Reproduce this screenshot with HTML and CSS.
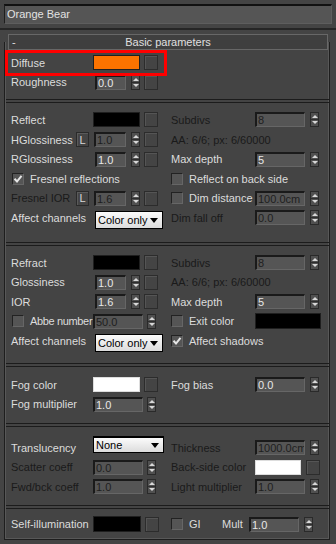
FILE: index.html
```html
<!DOCTYPE html>
<html>
<head>
<meta charset="utf-8">
<link rel="stylesheet" href="styles.css">
</head>
<body>
<div class="top"><div class="name">Orange Bear</div></div>
<div class="rule"></div>
<div class="head"><span class="minus">-</span><span class="title">Basic parameters</span><span></span></div>
<div class="frame">
  <div class="sec s1">
    <div class="col l">
      <div class="row"><span class="lab">Diffuse</span><span class="sw orange"></span><span class="mb"></span></div>
      <div class="row"><span class="lab">Roughness</span><span class="fld short">0.0</span><span class="spin"></span><span class="mb"></span></div>
    </div>
    <div class="col r"></div>
  </div>
  <div class="sep"></div>
  <div class="sec s2">
    <div class="col l">
      <div class="row"><span class="lab">Reflect</span><span class="sw black"></span><span class="mb"></span></div>
      <div class="row"><span class="lab narrow">HGlossiness</span><span class="lbtn">L</span><span class="fld short after-l dis">1.0</span><span class="spin"></span><span class="mb"></span></div>
      <div class="row"><span class="lab">RGlossiness</span><span class="fld short">1.0</span><span class="spin"></span><span class="mb"></span></div>
      <div class="row"><span class="cb on"><svg viewBox="0 0 10 10" width="10" height="10"><path d="M1.5 4.8 L4 7.5 L8.5 1.8" stroke="#e6e6e6" stroke-width="2" fill="none"/></svg></span><span class="cbl">Fresnel reflections</span></div>
      <div class="row"><span class="lab narrow dis">Fresnel IOR</span><span class="lbtn">L</span><span class="fld short after-l dis">1.6</span><span class="spin"></span><span class="mb"></span></div>
      <div class="row"><span class="lab">Affect channels</span><span class="dd">Color only</span></div>
    </div>
    <div class="col r">
      <div class="row"><span class="lab dis">Subdivs</span><span class="fld rw dis">8</span><span class="spin"></span></div>
      <div class="row"><span class="dis">AA: 6/6; px: 6/60000</span></div>
      <div class="row"><span class="lab">Max depth</span><span class="fld rw">5</span><span class="spin"></span></div>
      <div class="row"><span class="cb"></span><span class="cbl">Reflect on back side</span></div>
      <div class="row"><span class="cbwrap"><span class="cb"></span><span class="cbl">Dim distance</span></span><span class="fld rw dis">100.0cm</span><span class="spin"></span></div>
      <div class="row"><span class="lab dis">Dim fall off</span><span class="fld rw dis">0.0</span><span class="spin"></span></div>
    </div>
  </div>
  <div class="sep"></div>
  <div class="sec s3">
    <div class="col l">
      <div class="row"><span class="lab">Refract</span><span class="sw black"></span><span class="mb"></span></div>
      <div class="row"><span class="lab">Glossiness</span><span class="fld short">1.0</span><span class="spin"></span><span class="mb"></span></div>
      <div class="row"><span class="lab">IOR</span><span class="fld short">1.6</span><span class="spin"></span><span class="mb"></span></div>
      <div class="row"><span class="cb"></span><span class="cbl abbe">Abbe number</span><span class="fld wide dis">50.0</span><span class="spin sl"></span></div>
      <div class="row"><span class="lab">Affect channels</span><span class="dd">Color only</span></div>
    </div>
    <div class="col r">
      <div class="row"><span class="lab dis">Subdivs</span><span class="fld rw dis">8</span><span class="spin"></span></div>
      <div class="row"><span class="dis">AA: 6/6; px: 6/60000</span></div>
      <div class="row"><span class="lab">Max depth</span><span class="fld rw">5</span><span class="spin"></span></div>
      <div class="row"><span class="cbwrap"><span class="cb"></span><span class="cbl">Exit color</span></span><span class="sw black exit"></span></div>
      <div class="row"><span class="cb on"><svg viewBox="0 0 10 10" width="10" height="10"><path d="M1.5 4.8 L4 7.5 L8.5 1.8" stroke="#e6e6e6" stroke-width="2" fill="none"/></svg></span><span class="cbl">Affect shadows</span></div>
    </div>
  </div>
  <div class="sep"></div>
  <div class="sec s4">
    <div class="col l">
      <div class="row"><span class="lab">Fog color</span><span class="sw white"></span><span class="mb"></span></div>
      <div class="row"><span class="lab">Fog multiplier</span><span class="fld wide">1.0</span><span class="spin sl"></span></div>
    </div>
    <div class="col r">
      <div class="row"><span class="lab">Fog bias</span><span class="fld rw">0.0</span><span class="spin"></span></div>
    </div>
  </div>
  <div class="sep"></div>
  <div class="sec s5">
    <div class="col l">
      <div class="row"><span class="lab">Translucency</span><span class="dd tr">None</span></div>
      <div class="row"><span class="lab dis">Scatter coeff</span><span class="fld wide dis">0.0</span><span class="spin sl"></span></div>
      <div class="row"><span class="lab dis">Fwd/bck coeff</span><span class="fld wide dis">1.0</span><span class="spin sl"></span></div>
    </div>
    <div class="col r">
      <div class="row"><span class="lab dis">Thickness</span><span class="fld rw dis">1000.0cm</span><span class="spin"></span></div>
      <div class="row"><span class="lab dis">Back-side color</span><span class="sw white back"></span><span class="mb mb5"></span></div>
      <div class="row"><span class="lab dis">Light multiplier</span><span class="fld rw dis">1.0</span><span class="spin"></span></div>
    </div>
  </div>
  <div class="sep"></div>
  <div class="sec s6">
    <div class="col l">
      <div class="row"><span class="lab">Self-illumination</span><span class="sw black self"></span><span class="mb"></span></div>
    </div>
    <div class="col r">
      <div class="row"><span class="cb"></span><span class="cbl gi">GI</span><span class="mult">Mult</span><span class="fld rw">1.0</span><span class="spin"></span></div>
    </div>
  </div>
</div>
<div class="mark"></div>
</body>
</html>
```
FILE: styles.css
```css
body {
  margin: 0;
  width: 336px;
  height: 544px;
  overflow: hidden;
  background: #444444;
  font-family: "Liberation Sans", Arial, sans-serif;
  font-size: 11px;
  color: #dcdcdc;
  position: relative;
}
.top {
  padding: 4px 4px 0 4px;
}
.name {
  height: 20px;
  box-sizing: border-box;
  background: #555555;
  border-top: 2px solid #111111;
  border-left: 1px solid #1e1e1e;
  border-right: 1px solid #5e5e5e;
  border-bottom: 1px solid #5e5e5e;
  padding-left: 2px;
  line-height: 17px;
  color: #e2e2e2;
}
.rule {
  margin-top: 4px;
  height: 2px;
  background: #262626;
}
.head {
  margin: 4px 8px 0 8px;
  height: 16px;
  box-sizing: border-box;
  border: 1px solid #676767;
  background: #3f3f3f;
  position: relative;
  z-index: 1;
  display: grid;
  grid-template-columns: 1fr auto 1fr;
  align-items: center;
  line-height: 14px;
  color: #e0e0e0;
}
.minus {
  padding-left: 3px;
}
.frame {
  margin: -8px 6px 0 4px;
  padding-top: 8px;
  border-left: 1px solid #1e1e1e;
  border-right: 1px solid #1e1e1e;
  border-bottom: 1px solid #1e1e1e;
  box-shadow: inset 1px 0 #585858, inset -1px 0 #585858, inset 0 -1px #585858;
}
.sep {
  height: 4px;
  box-sizing: border-box;
  margin-left: 1px;
  border-top: 1px solid #1c1c1c;
  border-bottom: 1px solid #1c1c1c;
}
.sec {
  display: flex;
}
.s1 { padding: 3px 0 7px; }
.s2 { padding: 7px 0 14px; }
.s3 { padding: 7px 0 12px; }
.s4 { padding: 8px 0 9px; }
.s5 { padding: 11px 0 8px; }
.s6 { padding: 6px 0 5px; }
.col {
  display: flex;
  flex-direction: column;
  width: 162px;
}
.row {
  height: 19.6px;
  display: flex;
  align-items: center;
  white-space: nowrap;
}
.l .row { padding-left: 6px; }
.r .row { padding-left: 4px; }
.lab {
  width: 82px;
  flex: none;
}
.r .lab { width: 84px; }
.lab.narrow { width: 65px; }
.dis { color: #1a1a1a; }
.sw {
  width: 47px;
  height: 15px;
  box-sizing: border-box;
  border: 1px solid #1f1f1f;
  flex: none;
}
.orange { background: #fc7300; }
.black { background: #000000; }
.white { background: #ffffff; border-color: #dddddd; }
.exit { width: 66px; height: 16px; }
.back { width: 46px; }
.self { width: 48px; height: 16px; }
.mb {
  width: 14px;
  height: 15px;
  box-sizing: border-box;
  margin-left: 4px;
  border: 1px solid #2c2c2c;
  box-shadow: inset 1px 1px #555555;
  flex: none;
}
.mb5 { margin-left: 5px; }
.fld {
  height: 15px;
  box-sizing: border-box;
  background: #555555;
  border-top: 2px solid #1a1a1a;
  border-left: 2px solid #1a1a1a;
  border-right: 1px solid #666666;
  border-bottom: 1px solid #666666;
  padding-left: 1px;
  line-height: 12px;
  color: #e8e8e8;
  overflow: hidden;
  white-space: nowrap;
  flex: none;
}
.fld.dis { color: #1e1e1e; }
.short { width: 31px; margin-left: 2px; }
.short.after-l { margin-left: 5px; width: 32px; }
.wide { width: 50px; }
.rw { width: 50px; }
.spin {
  width: 9px;
  height: 15px;
  box-sizing: border-box;
  margin-left: 5px;
  border: 1px solid #2a2a2a;
  background: linear-gradient(#505050 0 6px, #2e2e2e 6px 7px, #505050 7px);
  position: relative;
  flex: none;
}
.spin.sl { margin-left: 4px; }
.spin::before, .spin::after {
  content: "";
  position: absolute;
  left: 0.5px;
  width: 0;
  height: 0;
  border-left: 3px solid transparent;
  border-right: 3px solid transparent;
}
.spin::before {
  top: 2px;
  border-bottom: 3px solid #d8d8d8;
}
.spin::after {
  bottom: 2px;
  border-top: 3px solid #d8d8d8;
}
.lbtn {
  width: 13px;
  height: 15px;
  box-sizing: border-box;
  border: 1px solid #2a2a2a;
  box-shadow: inset 1px 1px #5a5a5a;
  display: flex;
  align-items: center;
  justify-content: center;
  color: #d8d8d8;
  flex: none;
}
.cb {
  width: 12px;
  height: 12px;
  box-sizing: border-box;
  background: #555555;
  border-top: 1px solid #222222;
  border-left: 1px solid #222222;
  border-right: 1px solid #666666;
  border-bottom: 1px solid #666666;
  display: flex;
  align-items: center;
  justify-content: center;
  flex: none;
}
.l .cb { margin-left: 1px; }
.cbl { margin-left: 6px; }
.cbwrap {
  width: 84px;
  display: flex;
  align-items: center;
  flex: none;
}
.abbe {
  width: 63px;
  letter-spacing: -0.35px;
  flex: none;
}
.gi { width: 33px; flex: none; }
.mult { width: 27px; flex: none; }
.dd {
  width: 68px;
  height: 18px;
  box-sizing: border-box;
  margin-left: 2px;
  align-self: flex-start;
  margin-top: 3px;
  border: 1px solid #000000;
  background: linear-gradient(#fbfbfb, #dcdcdc);
  color: #000000;
  padding-left: 2px;
  line-height: 16px;
  position: relative;
  flex: none;
}
.dd::after {
  content: "";
  position: absolute;
  right: 4px;
  top: 6px;
  width: 0;
  height: 0;
  border-left: 4px solid transparent;
  border-right: 4px solid transparent;
  border-top: 5px solid #000000;
}
.dd.tr {
  width: 71px;
  height: 17px;
  margin-left: 0;
  margin-top: -2px;
  border-top-width: 2px;
  line-height: 14px;
}
.dd.tr::after { top: 5px; }
.mark {
  position: absolute;
  left: 5px;
  top: 50px;
  width: 162px;
  height: 26px;
  box-sizing: border-box;
  border: 3px solid #ff0000;
}
```
